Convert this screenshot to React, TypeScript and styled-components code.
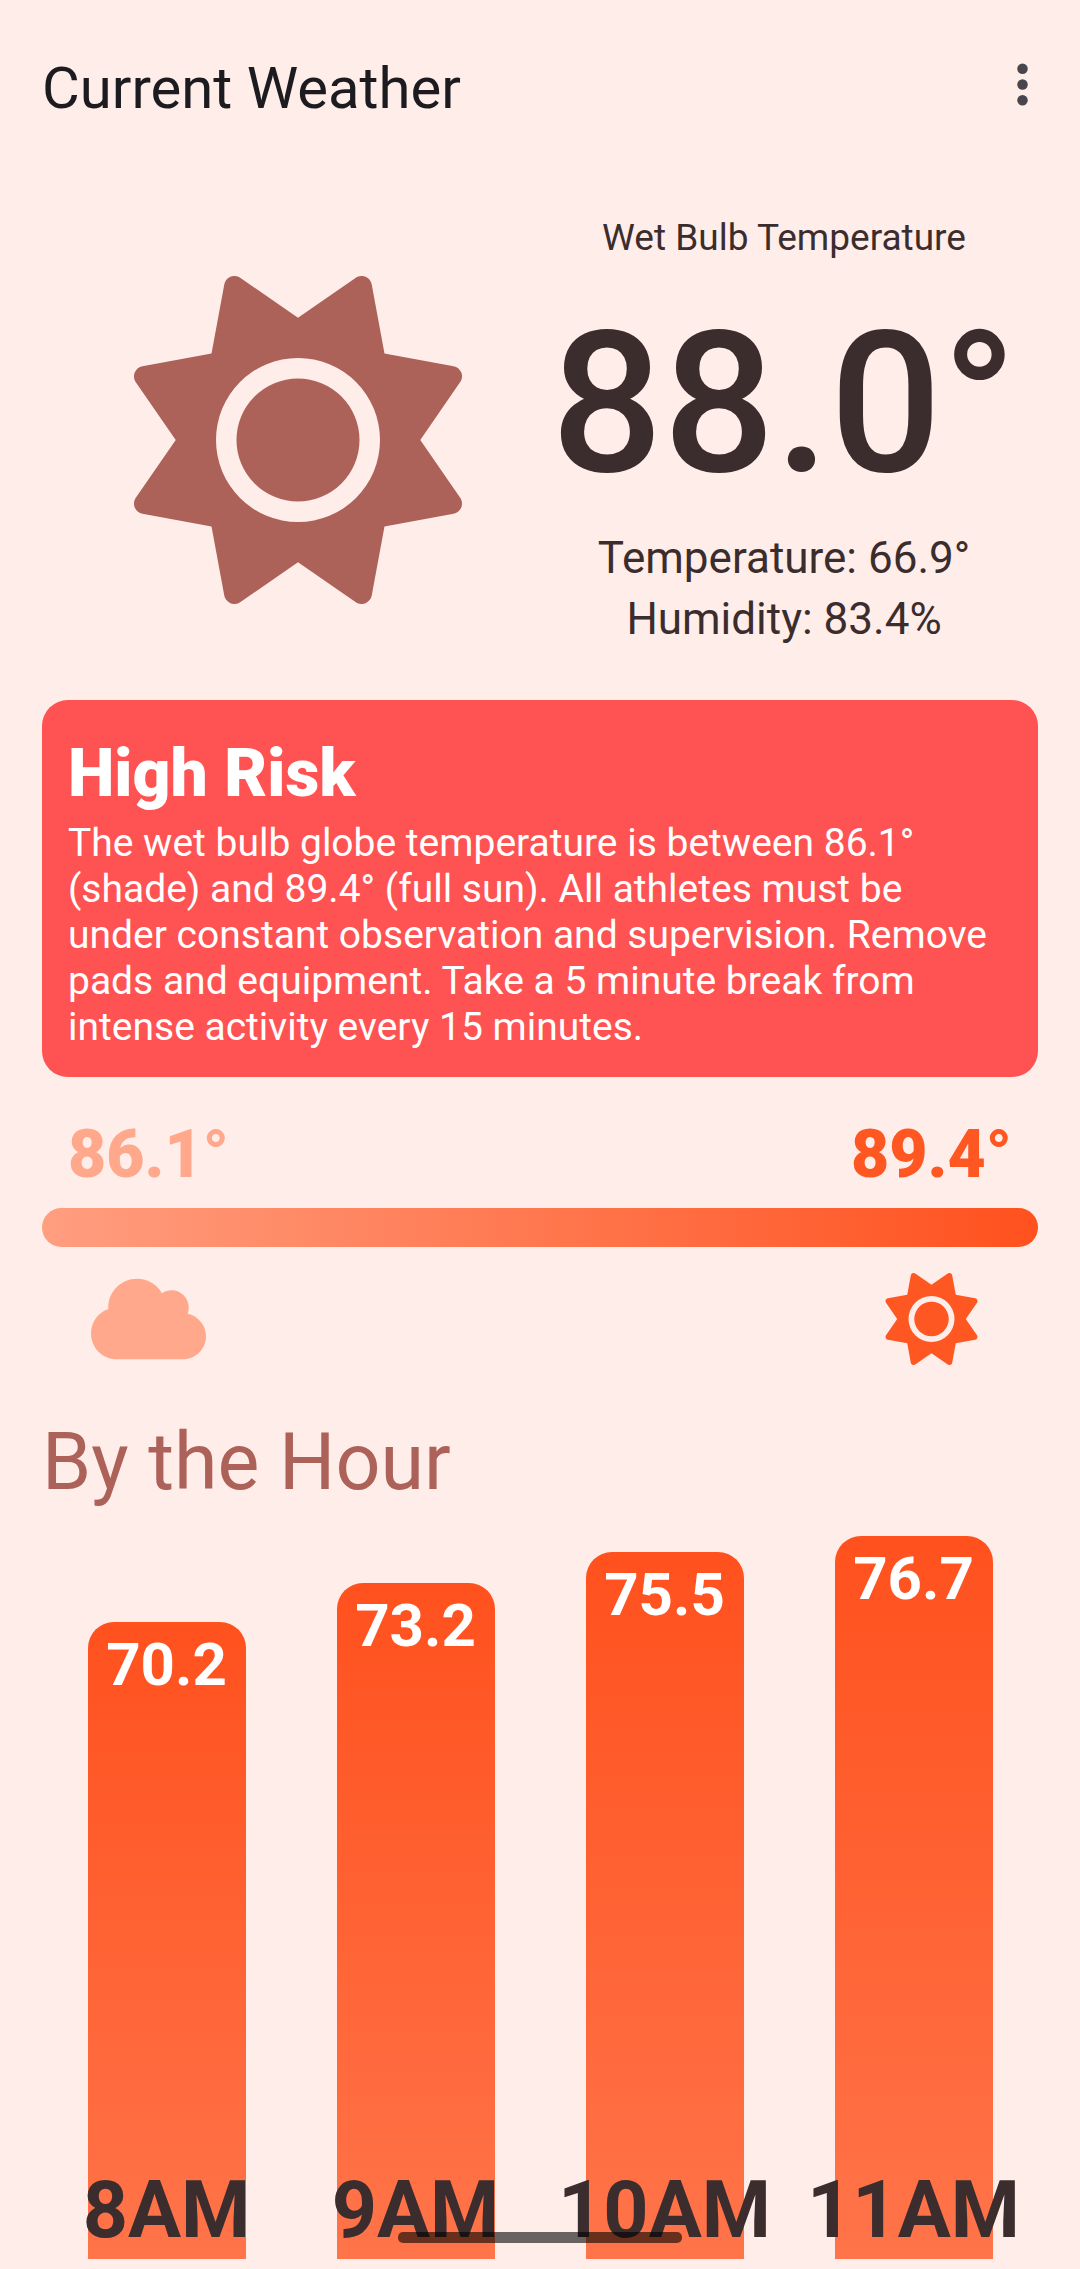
import React from "react";
import styled, { createGlobalStyle } from "styled-components";
import { FaCloud, FaSun } from "react-icons/fa6";

const GlobalStyle = createGlobalStyle`
  *, *::before, *::after {
    box-sizing: border-box;
  }

  body {
    margin: 0;
    background: #ffedea;
    color: #3b2d2d;
    font-family: Roboto, "Noto Sans", sans-serif;
  }

  h1, h2, p {
    margin: 0;
  }
`;

const Page = styled.div`
  display: flex;
  flex-direction: column;
  padding: 0 42px 10px;
`;

const AppBar = styled.header`
  display: flex;
  align-items: center;
  justify-content: space-between;
  height: 168px;
`;

const AppTitle = styled.h1`
  padding-top: 8px;
  color: #1c1b1f;
  font-size: 58px;
  font-weight: 400;
  line-height: 68px;
`;

const MenuButton = styled.button`
  display: flex;
  align-items: center;
  justify-content: center;
  width: 126px;
  height: 126px;
  margin-right: -47px;
  padding: 0;
  border: 0;
  border-radius: 50%;
  background: transparent;
  color: #49454f;
`;

const MenuIcon = styled.svg`
  width: 63px;
  height: 63px;
  fill: currentColor;
`;

const Current = styled.section`
  display: flex;
  align-items: center;
  padding-top: 48px;
`;

const ConditionIcon = styled.div`
  display: flex;
  padding: 14px 68px 0 92px;
  color: #ad6259;
`;

const Readings = styled.div`
  display: flex;
  flex: 1;
  flex-direction: column;
  align-items: center;
  white-space: nowrap;
`;

const ReadingLabel = styled.p`
  font-size: 37px;
  line-height: 44px;
`;

const WetBulb = styled.p`
  margin: 28px 0 8px;
  font-size: 197px;
  font-weight: 500;
  line-height: 232px;
`;

const ReadingDetail = styled.p`
  font-size: 44px;
  line-height: 61px;
`;

const RiskCard = styled.section`
  margin-top: 50px;
  padding: 35px 36px 27px 26px;
  border-radius: 26px;
  background: #ff5252;
  color: #ffffff;
`;

const RiskTitle = styled.h2`
  margin-bottom: 8px;
  font-size: 66px;
  font-weight: 900;
  line-height: 77px;
`;

const RiskText = styled.p`
  font-size: 39px;
  line-height: 46px;
`;

const Range = styled.section`
  display: flex;
  flex-direction: column;
  margin-top: 39px;
`;

const RangeRow = styled.div<{ $inset: number }>`
  display: flex;
  align-items: center;
  justify-content: space-between;
  padding: 0 ${(p) => p.$inset}px;
`;

const RangeValue = styled.span<{ $color: string }>`
  color: ${(p) => p.$color};
  font-size: 66px;
  font-weight: 900;
  line-height: 77px;
`;

const RangeTrack = styled.div`
  height: 39px;
  margin: 15px 0 26px;
  border-radius: 20px;
  background: linear-gradient(to right, #ff9e80, #ff511e);
`;

const RangeIcon = styled.span<{ $color: string }>`
  display: flex;
  width: 115px;
  height: 92px;
  color: ${(p) => p.$color};

  svg {
    width: 100%;
    height: 100%;
  }
`;

const SectionTitle = styled.h2`
  margin-top: 51px;
  color: #ad6259;
  font-size: 79px;
  font-weight: 400;
  line-height: 93px;
`;

const Chart = styled.ul`
  display: grid;
  grid-template-columns: repeat(4, 1fr);
  align-items: end;
  justify-items: center;
  margin: 27px 0 0;
  padding: 0;
  list-style: none;
`;

const Bar = styled.li<{ $height: number }>`
  display: flex;
  flex-direction: column;
  align-items: center;
  justify-content: space-between;
  width: 158px;
  height: ${(p) => p.$height}px;
  padding: 8px 0 2px;
  border-radius: 26px 26px 0 0;
  background: linear-gradient(to bottom, #ff511e, #ff744a);
  font-weight: 700;
  white-space: nowrap;
`;

const BarValue = styled.span`
  color: #ffffff;
  font-size: 60px;
  line-height: 70px;
`;

const BarHour = styled.span`
  font-size: 79px;
  line-height: 93px;
`;

const HomeIndicator = styled.div`
  position: fixed;
  bottom: 26px;
  left: 50%;
  width: 284px;
  height: 11px;
  border-radius: 5px;
  background: rgba(0, 0, 0, 0.59);
  transform: translateX(-50%);
`;

const SHADE = "#ffa88c";
const SUN = "#ff5722";

const HOURS = [
  { hour: "8AM", temperature: 70.2 },
  { hour: "9AM", temperature: 73.2 },
  { hour: "10AM", temperature: 75.5 },
  { hour: "11AM", temperature: 76.7 },
];

// The chart starts at 22 degrees, so that differences between hours stand out.
const barHeight = (temperature: number) => Math.round((temperature - 22) * 13.21);

export default function App() {
  return (
    <>
      <GlobalStyle />
      <Page>
        <AppBar>
          <AppTitle>Current Weather</AppTitle>
          <MenuButton type="button" aria-label="More options">
            <MenuIcon viewBox="0 0 24 24" aria-hidden="true">
              <circle cx="12" cy="6" r="2" />
              <circle cx="12" cy="12" r="2" />
              <circle cx="12" cy="18" r="2" />
            </MenuIcon>
          </MenuButton>
        </AppBar>

        <main>
          <Current>
            <ConditionIcon>
              <FaSun size={328} aria-hidden="true" />
            </ConditionIcon>
            <Readings>
              <ReadingLabel>Wet Bulb Temperature</ReadingLabel>
              <WetBulb>88.0°</WetBulb>
              <ReadingDetail>Temperature: 66.9°</ReadingDetail>
              <ReadingDetail>Humidity: 83.4%</ReadingDetail>
            </Readings>
          </Current>

          <RiskCard>
            <RiskTitle>High Risk</RiskTitle>
            <RiskText>
              The wet bulb globe temperature is between 86.1° (shade) and 89.4°
              (full sun). All athletes must be under constant observation and
              supervision. Remove pads and equipment. Take a 5 minute break from
              intense activity every 15 minutes.
            </RiskText>
          </RiskCard>

          <Range>
            <RangeRow $inset={26}>
              <RangeValue $color={SHADE}>86.1°</RangeValue>
              <RangeValue $color={SUN}>89.4°</RangeValue>
            </RangeRow>
            <RangeTrack />
            <RangeRow $inset={49}>
              <RangeIcon $color={SHADE}>
                <FaCloud aria-hidden="true" />
              </RangeIcon>
              <RangeIcon $color={SUN}>
                <FaSun aria-hidden="true" />
              </RangeIcon>
            </RangeRow>
          </Range>

          <SectionTitle>By the Hour</SectionTitle>
          <Chart>
            {HOURS.map(({ hour, temperature }) => (
              <Bar key={hour} $height={barHeight(temperature)}>
                <BarValue>{temperature.toFixed(1)}</BarValue>
                <BarHour>{hour}</BarHour>
              </Bar>
            ))}
          </Chart>
        </main>
      </Page>
      <HomeIndicator />
    </>
  );
}
